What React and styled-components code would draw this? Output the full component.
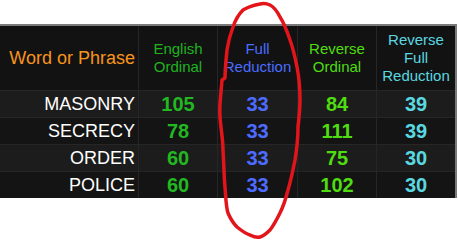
import styled, { createGlobalStyle } from "styled-components";

const GlobalStyle = createGlobalStyle`
  html, body {
    margin: 0;
    padding: 0;
    background: #ffffff;
  }
  body {
    font-family: "Liberation Sans", Arial, sans-serif;
  }
`;

const columns = [
  { title: ["English", "Ordinal"], color: "#1fb31f", numColor: "#22b822" },
  { title: ["Full", "Reduction"], color: "#4a6cff", numColor: "#4d6bff" },
  { title: ["Reverse", "Ordinal"], color: "#4fdc10", numColor: "#4fdc10" },
  { title: ["Reverse", "Full", "Reduction"], color: "#5ad8e0", numColor: "#5ad8e0" },
];

const rows = [
  { word: "MASONRY", values: [105, 33, 84, 39] },
  { word: "SECRECY", values: [78, 33, 111, 39] },
  { word: "ORDER", values: [60, 33, 75, 30] },
  { word: "POLICE", values: [60, 33, 102, 30] },
];

const App = () => {
  return (
    <Page>
      <GlobalStyle />
      <TableFrame>
        <Grid>
          <HeaderCell $align="right" color="#f7941d" $size={18}>
            Word or Phrase
          </HeaderCell>
          {columns.map((col) => (
            <HeaderCell key={col.title.join(" ")} color={col.color}>
              {col.title.map((line) => (
                <span key={line}>{line}</span>
              ))}
            </HeaderCell>
          ))}
          {rows.map((row, i) => (
            <Row key={row.word}>
              <WordCell $odd={i % 2 === 0}>{row.word}</WordCell>
              {row.values.map((v, j) => (
                <NumCell key={j} $odd={i % 2 === 0} color={columns[j].numColor}>
                  {v}
                </NumCell>
              ))}
            </Row>
          ))}
        </Grid>
      </TableFrame>
      <Scribble viewBox="0 0 458 243" width="458" height="243">
        <path
          d="M 222 80
             C 221 95, 219 105, 220 117
             C 221 130, 223 140, 223 150
             C 224 165, 224 178, 225 187
             C 226 200, 226 207, 228 213
             C 231 220, 234 224, 237 227
             C 242 231, 246 234, 250 235
             C 254 237, 257 238, 260 237
             C 264 236, 267 233, 270 230
             C 274 225, 277 219, 280 213
             C 284 205, 286 198, 288 190
             C 291 180, 293 170, 295 160
             C 297 148, 298 138, 298 127
             C 299 118, 300 108, 300 100
             C 300 88, 299 77, 297 67
             C 295 57, 293 48, 290 40
             C 287 31, 284 23, 280 17
             C 277 11, 274 7, 270 5
             C 266 3, 263 3, 260 4
             C 254 5, 248 7, 243 10
             C 238 15, 235 21, 233 27
             C 230 35, 228 43, 227 50
             C 226 60, 225 70, 225 78
             L 222 80"
          fill="none"
          stroke="#e3151b"
          strokeWidth="3.5"
          strokeLinecap="round"
          strokeLinejoin="round"
        />
      </Scribble>
    </Page>
  );
};

export default App;

const Page = styled.div`
  position: relative;
  width: 458px;
  height: 243px;
  padding-top: 24px;
  box-sizing: border-box;
  overflow: hidden;
`;

const TableFrame = styled.div`
  width: 457px;
  box-sizing: border-box;
  border-top: 2px solid #7a7a7a;
  border-right: 2px solid #7a7a7a;
  background: #262626;
`;

const Grid = styled.div`
  display: grid;
  grid-template-columns: 138px 78px 79px 78px 78px;
  grid-template-rows: 64px repeat(4, 26px);
  column-gap: 1px;
  row-gap: 1px;
  background: #262626;
`;

const Row = styled.div`
  display: contents;
`;

const HeaderCell = styled.div`
  background: #121212;
  color: ${(props) => props.color};
  font-size: ${(props) => props.$size || 15}px;
  line-height: 18px;
  display: flex;
  flex-direction: column;
  justify-content: center;
  align-items: ${(props) => (props.$align === "right" ? "flex-end" : "center")};
  padding-right: ${(props) => (props.$align === "right" ? "3px" : "0")};
  text-align: center;
  white-space: nowrap;
`;

const WordCell = styled.div`
  background: ${(props) => (props.$odd ? "#1c1c1c" : "#141414")};
  color: #ffffff;
  font-size: 18px;
  display: flex;
  align-items: center;
  justify-content: flex-end;
  padding-right: 3px;
`;

const NumCell = styled.div`
  background: ${(props) => (props.$odd ? "#1c1c1c" : "#141414")};
  color: ${(props) => props.color};
  font-size: 20px;
  font-weight: bold;
  display: flex;
  align-items: center;
  justify-content: center;
`;

const Scribble = styled.svg`
  position: absolute;
  left: 0;
  top: 0;
  pointer-events: none;
`;
